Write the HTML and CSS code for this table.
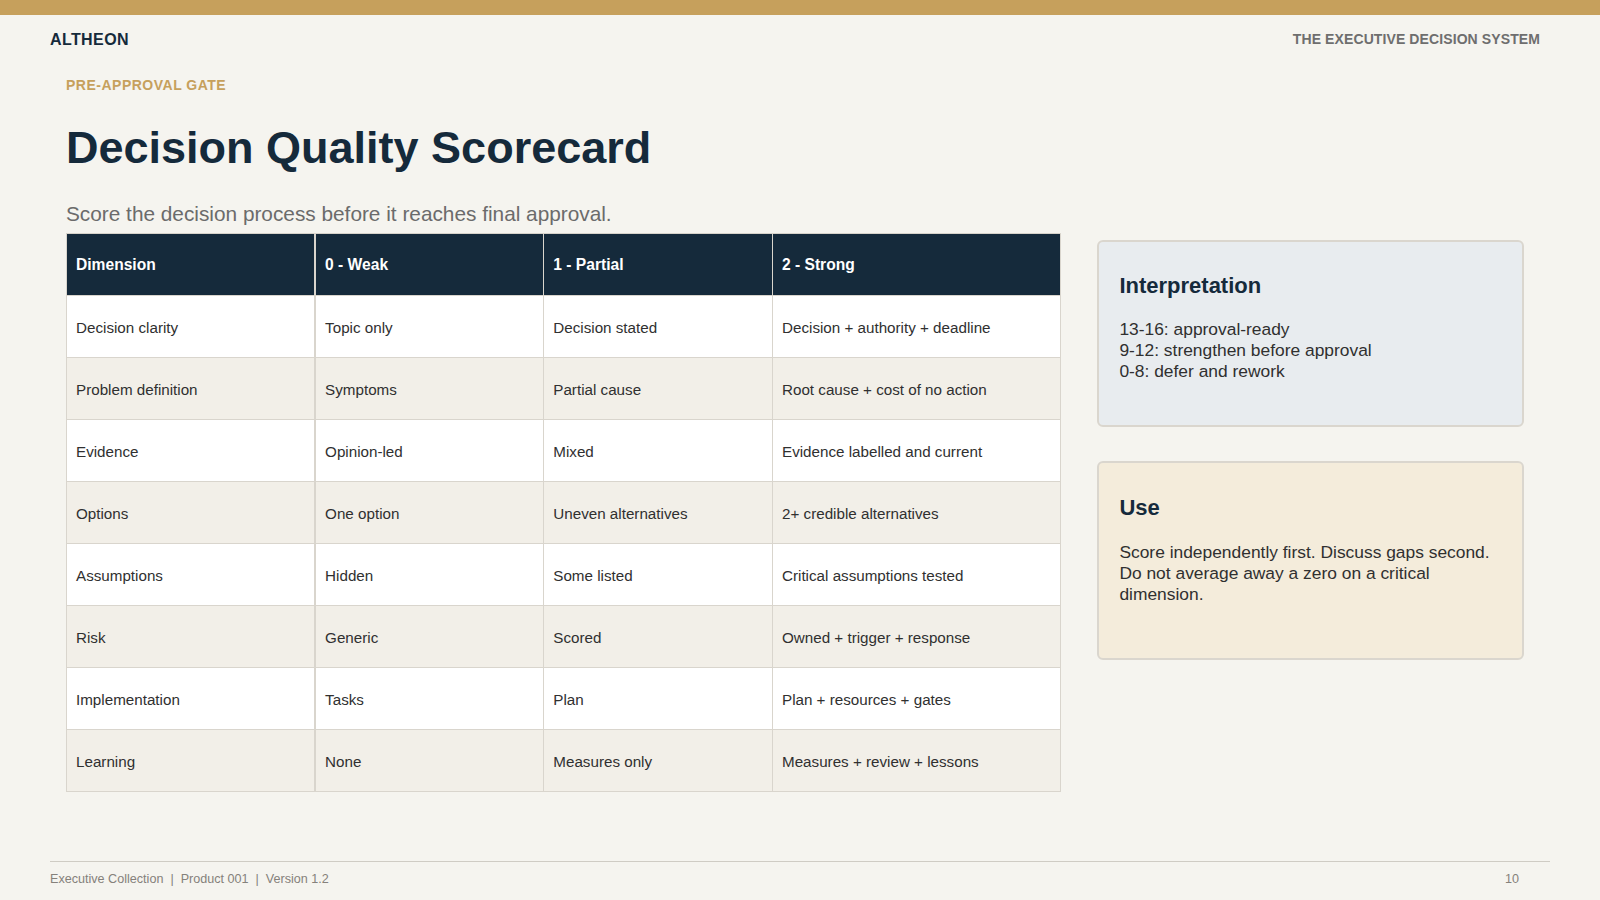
FILE: index.html
```html
<!DOCTYPE html>
<html lang="en">
<head>
<meta charset="utf-8">
<title>Decision Quality Scorecard</title>
<link rel="stylesheet" href="styles.css">
</head>
<body>
<div class="topbar"></div>
<header class="header">
  <div class="brand">ALTHEON</div>
  <div class="tagline">THE EXECUTIVE DECISION SYSTEM</div>
</header>
<main class="content">
  <div class="eyebrow">PRE-APPROVAL GATE</div>
  <h1 class="title">Decision Quality Scorecard</h1>
  <p class="subtitle">Score the decision process before it reaches final approval.</p>
  <div class="layout">
    <table class="scorecard">
      <colgroup>
        <col class="c-dim">
        <col class="c-mid">
        <col class="c-mid">
        <col class="c-strong">
      </colgroup>
      <thead>
        <tr><th>Dimension</th><th>0 - Weak</th><th>1 - Partial</th><th>2 - Strong</th></tr>
      </thead>
      <tbody>
        <tr><td>Decision clarity</td><td>Topic only</td><td>Decision stated</td><td>Decision + authority + deadline</td></tr>
        <tr><td>Problem definition</td><td>Symptoms</td><td>Partial cause</td><td>Root cause + cost of no action</td></tr>
        <tr><td>Evidence</td><td>Opinion-led</td><td>Mixed</td><td>Evidence labelled and current</td></tr>
        <tr><td>Options</td><td>One option</td><td>Uneven alternatives</td><td>2+ credible alternatives</td></tr>
        <tr><td>Assumptions</td><td>Hidden</td><td>Some listed</td><td>Critical assumptions tested</td></tr>
        <tr><td>Risk</td><td>Generic</td><td>Scored</td><td>Owned + trigger + response</td></tr>
        <tr><td>Implementation</td><td>Tasks</td><td>Plan</td><td>Plan + resources + gates</td></tr>
        <tr><td>Learning</td><td>None</td><td>Measures only</td><td>Measures + review + lessons</td></tr>
      </tbody>
    </table>
    <aside class="side">
      <section class="card card-info">
        <h3 class="card-title">Interpretation</h3>
        <p class="card-text">13-16: approval-ready<br>9-12: strengthen before approval<br>0-8: defer and rework</p>
      </section>
      <section class="card card-use">
        <h3 class="card-title">Use</h3>
        <p class="card-text">Score independently first. Discuss gaps second. Do not average away a zero on a critical dimension.</p>
      </section>
    </aside>
  </div>
</main>
<footer class="footer">
  <div class="footer-meta">Executive Collection&nbsp;&nbsp;|&nbsp;&nbsp;Product 001&nbsp;&nbsp;|&nbsp;&nbsp;Version 1.2</div>
  <div class="page-num">10</div>
</footer>
</body>
</html>
```

FILE: styles.css
```css
* { box-sizing: border-box; }

html, body {
  margin: 0;
  padding: 0;
}

body {
  width: 1600px;
  height: 900px;
  overflow: hidden;
  background: #f5f4ef;
  font-family: "Liberation Sans", Arial, sans-serif;
  color: #333333;
  display: flex;
  flex-direction: column;
}

.topbar {
  height: 15px;
  background: #c6a05c;
  flex: none;
}

.header {
  display: flex;
  justify-content: space-between;
  align-items: center;
  padding: 15px 60px 0 50px;
  height: 34px;
  flex: none;
}

.brand {
  font-size: 16px;
  line-height: 19px;
  font-weight: 700;
  letter-spacing: 0.4px;
  color: #152a3b;
}

.tagline {
  font-size: 14px;
  line-height: 19px;
  font-weight: 700;
  color: #6e6e6e;
  letter-spacing: 0.1px;
}

.content {
  flex: 1;
  padding: 28px 76px 0 66px;
}

.eyebrow {
  font-size: 14px;
  line-height: 17px;
  font-weight: 700;
  letter-spacing: 0.5px;
  color: #c6a05c;
}

.title {
  margin: 28px 0 0;
  font-size: 45px;
  line-height: 52px;
  font-weight: 700;
  color: #152a3b;
}

.subtitle {
  margin: 28px 0 0;
  font-size: 20.8px;
  line-height: 24px;
  color: #6b6b6b;
}

.layout {
  margin-top: 7px;
  display: grid;
  grid-template-columns: 7fr 3fr;
  column-gap: 36px;
  align-items: start;
}

.scorecard {
  width: 100%;
  table-layout: fixed;
  border-collapse: collapse;
  font-size: 15.2px;
  border: 1px solid #d6d2ca;
}

.c-dim { width: 25%; }
.c-mid { width: 23%; }
.c-strong { width: 29%; }

.scorecard th,
.scorecard td {
  height: 62px;
  padding: 1px 9px 0;
  text-align: left;
  vertical-align: middle;
  border: 1px solid #d9d5cd;
}

.scorecard th:first-child,
.scorecard td:first-child {
  border-right-width: 2px;
}

.scorecard th {
  background: #152a3b;
  color: #ffffff;
  font-size: 15.6px;
  font-weight: 700;
  border-top-color: #d6d2ca;
  border-bottom-color: #d9d5cd;
}

.scorecard td {
  color: #303030;
  background: #ffffff;
}

.scorecard tbody tr:nth-child(even) td {
  background: #f2efe8;
}

.side {
  margin-top: 7px;
  display: flex;
  flex-direction: column;
  gap: 34px;
}

.card {
  border: 2px solid #dad6ce;
  border-radius: 6px;
  padding: 31px 20px 44px;
}

.card-info { background: #e8ecef; }
.card-use { background: #f4ecdb; padding-top: 32px; padding-bottom: 53px; }

.card-title {
  margin: 0 0 20px;
  font-size: 22px;
  line-height: 26px;
  font-weight: 700;
  color: #152a3b;
}

.card-use .card-title { margin-bottom: 21px; }

.card-text {
  margin: 0;
  font-size: 17.4px;
  line-height: 20.8px;
  color: #303030;
}

.footer {
  flex: none;
  margin: 0 50px;
  border-top: 1px solid #cfccc4;
  padding: 10px 31px 13px 0;
  display: flex;
  justify-content: space-between;
  font-size: 12.6px;
  line-height: 15px;
  color: #85817b;
}
```
